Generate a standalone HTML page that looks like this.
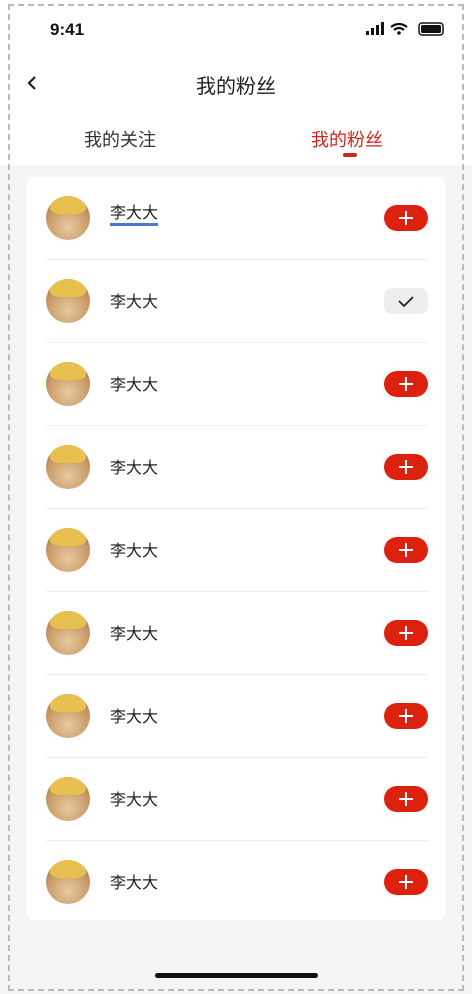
<!DOCTYPE html>
<html><head><meta charset="utf-8"><style>
*{margin:0;padding:0;box-sizing:border-box}
body{width:472px;height:994px;background:#f5f5f5;font-family:"Liberation Sans","Noto Sans CJK SC",sans-serif;position:relative;overflow:hidden;color:#222}
.frame{position:absolute;left:8px;top:4px;width:456px;height:987px;border:2px dashed #bbb;pointer-events:none;z-index:9}
.top{position:absolute;left:0;top:0;width:472px;height:165px;background:#fff}
.time{position:absolute;left:50px;top:20px;font-size:17px;font-weight:bold;color:#111}
.title{position:absolute;left:0;width:472px;top:70px;text-align:center;font-size:20px;color:#222}
.tab{position:absolute;top:126px;font-size:18px}
.card{position:absolute;left:26px;top:177px;width:420px;height:743px;background:#fff;border-radius:10px}
.row{position:absolute;left:20px;width:382px;height:83px}
.av{position:absolute;left:0;top:19px;width:44px;height:44px;border-radius:50%;background:radial-gradient(circle at 50% 70%,#e8c9a0 0,#c99a66 55%,#8a6a44 100%);overflow:hidden}
.av:before{content:"";position:absolute;left:4px;top:0;width:36px;height:18px;border-radius:50% 50% 30% 30%;background:#e8c050}
.name{position:absolute;left:64px;top:28px;font-size:16px;color:#222}
.btn{position:absolute;right:0;top:28px;width:44px;height:26px;border-radius:13px;background:#dd210f}
.btn:before{content:"";position:absolute;left:21px;top:6px;width:2px;height:14px;background:#fff}
.btn:after{content:"";position:absolute;left:15px;top:12px;width:14px;height:2px;background:#fff}
.chk{position:absolute;right:0;top:28px;width:44px;height:26px;border-radius:8px;background:#eee}
.div{position:absolute;left:0;bottom:0;width:382px;height:1px;background:#eee}
</style></head><body>
<div class="top"></div>
<div class="time">9:41</div>
<svg style="position:absolute;left:366px;top:22px" width="80" height="16" viewBox="0 0 80 16">
<rect x="0" y="9" width="3" height="4" fill="#111"/><rect x="5" y="6" width="3" height="7" fill="#111"/><rect x="10" y="3" width="3" height="10" fill="#111"/><rect x="15" y="0" width="3" height="13" fill="#111"/>
<path d="M25 5 Q33 -1 41 5" stroke="#111" stroke-width="2.2" fill="none"/><path d="M28 8 Q33 4 38 8" stroke="#111" stroke-width="2.2" fill="none"/><circle cx="33" cy="11" r="1.8" fill="#111"/>
<rect x="53" y="1" width="24" height="12" rx="3" fill="none" stroke="#111" stroke-width="1.5"/><rect x="55" y="3" width="20" height="8" rx="1.5" fill="#111"/>
</svg>
<svg style="position:absolute;left:25px;top:74px" width="14" height="18"><path d="M10 3 L4 9 L10 15" stroke="#222" stroke-width="2.2" fill="none"/></svg>
<div class="title">我的粉丝</div>
<div class="tab" style="left:84px;color:#333">我的关注</div>
<div class="tab" style="left:311px;color:#d4231a">我的粉丝</div>
<div style="position:absolute;left:343px;top:153px;width:14px;height:4px;border-radius:2px;background:#d4231a"></div>
<div class="card">
<div class="row" style="top:0"><div class="av"></div><div class="name" style="border-bottom:3px solid #4a78d4;line-height:18px">李大大</div><div class="btn"></div><div class="div"></div></div>
<div class="row" style="top:83px"><div class="av"></div><div class="name">李大大</div><div class="chk"><svg width="44" height="26"><path d="M15 13 L20 18 L29 9" stroke="#222" stroke-width="1.8" fill="none"/></svg></div><div class="div"></div></div>
<div class="row" style="top:166px"><div class="av"></div><div class="name">李大大</div><div class="btn"></div><div class="div"></div></div>
<div class="row" style="top:249px"><div class="av"></div><div class="name">李大大</div><div class="btn"></div><div class="div"></div></div>
<div class="row" style="top:332px"><div class="av"></div><div class="name">李大大</div><div class="btn"></div><div class="div"></div></div>
<div class="row" style="top:415px"><div class="av"></div><div class="name">李大大</div><div class="btn"></div><div class="div"></div></div>
<div class="row" style="top:498px"><div class="av"></div><div class="name">李大大</div><div class="btn"></div><div class="div"></div></div>
<div class="row" style="top:581px"><div class="av"></div><div class="name">李大大</div><div class="btn"></div><div class="div"></div></div>
<div class="row" style="top:664px"><div class="av"></div><div class="name">李大大</div><div class="btn"></div></div>
</div>
<div style="position:absolute;left:155px;top:973px;width:163px;height:5px;border-radius:3px;background:#111"></div>
<div class="frame"></div>
</body></html>
